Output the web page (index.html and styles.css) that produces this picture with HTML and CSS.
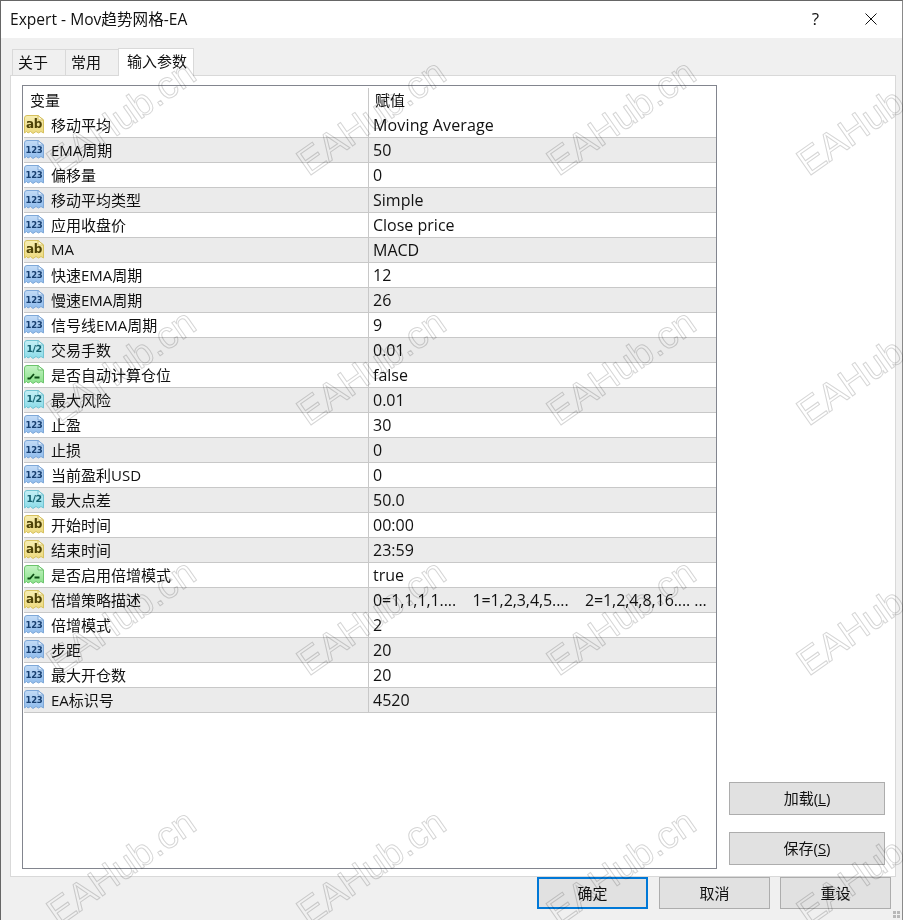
FILE: index.html
```html
<!DOCTYPE html>
<html lang="zh">
<head>
<meta charset="utf-8">
<title>Expert - Mov趋势网格-EA</title>
<link rel="stylesheet" href="styles.css">
</head>
<body>
<svg class="defs" width="0" height="0">
  <defs>
    <linearGradient id="gy" x1="0" y1="0" x2="0" y2="1"><stop offset="0" stop-color="#f7eeb4"/><stop offset="1" stop-color="#ecd97e"/></linearGradient>
    <linearGradient id="gb" x1="0" y1="0" x2="0" y2="1"><stop offset="0" stop-color="#c4dcf6"/><stop offset="1" stop-color="#8ebbec"/></linearGradient>
    <linearGradient id="gc" x1="0" y1="0" x2="0" y2="1"><stop offset="0" stop-color="#c6f0f6"/><stop offset="1" stop-color="#8adbe8"/></linearGradient>
    <linearGradient id="gg" x1="0" y1="0" x2="0" y2="1"><stop offset="0" stop-color="#c4f3c4"/><stop offset="1" stop-color="#8ae08a"/></linearGradient>
    <symbol id="sheet" viewBox="0 0 20 20">
      <path d="M0.5 3 Q0.5 0.5 3 0.5 H14 L19.5 5 V18 L17 16.5 L14.5 18 L12 16.5 L9 18.5 L6.5 16.5 L4 18 L2.5 16.5 L0.5 18 Z"/>
      <path class="fold" d="M14 0.5 V5 H19.5 Z"/>
    </symbol>
  </defs>
</svg>
<main class="window">
  <header class="titlebar">
    <span class="title">Expert - Mov趋势网格-EA</span>
    <span class="help">?</span>
    <svg class="close" width="12" height="12" viewBox="0 0 12 12"><path d="M0.5 0.5 L11.5 11.5 M11.5 0.5 L0.5 11.5"/></svg>
  </header>
  <div class="tabs">
    <span class="tab">关于</span>
    <span class="tab">常用</span>
    <span class="tab active">输入参数</span>
  </div>
  <section class="panel">
    <div class="table">
      <div class="row head"><span class="name">变量</span><span class="val cjk">赋值</span></div>
      <div class="row"><span class="name"><span class="ic ab"><svg><use href="#sheet" fill="url(#gy)"/></svg><b>ab</b></span>移动平均</span><span class="val wide">Moving Average</span></div>
      <div class="row"><span class="name"><span class="ic n"><svg><use href="#sheet" fill="url(#gb)"/></svg><b>123</b></span>EMA周期</span><span class="val">50</span></div>
      <div class="row"><span class="name"><span class="ic n"><svg><use href="#sheet" fill="url(#gb)"/></svg><b>123</b></span>偏移量</span><span class="val">0</span></div>
      <div class="row"><span class="name"><span class="ic n"><svg><use href="#sheet" fill="url(#gb)"/></svg><b>123</b></span>移动平均类型</span><span class="val">Simple</span></div>
      <div class="row"><span class="name"><span class="ic n"><svg><use href="#sheet" fill="url(#gb)"/></svg><b>123</b></span>应用收盘价</span><span class="val">Close price</span></div>
      <div class="row"><span class="name"><span class="ic ab"><svg><use href="#sheet" fill="url(#gy)"/></svg><b>ab</b></span>MA</span><span class="val">MACD</span></div>
      <div class="row"><span class="name"><span class="ic n"><svg><use href="#sheet" fill="url(#gb)"/></svg><b>123</b></span>快速EMA周期</span><span class="val">12</span></div>
      <div class="row"><span class="name"><span class="ic n"><svg><use href="#sheet" fill="url(#gb)"/></svg><b>123</b></span>慢速EMA周期</span><span class="val">26</span></div>
      <div class="row"><span class="name"><span class="ic n"><svg><use href="#sheet" fill="url(#gb)"/></svg><b>123</b></span>信号线EMA周期</span><span class="val">9</span></div>
      <div class="row"><span class="name"><span class="ic f"><svg><use href="#sheet" fill="url(#gc)"/></svg><b>1/2</b></span>交易手数</span><span class="val">0.01</span></div>
      <div class="row"><span class="name"><span class="ic t"><svg viewBox="0 0 20 20"><use href="#sheet" fill="url(#gg)"/><path class="sw" d="M3.5 13.5 H6 L10 9 M10.5 12.5 H15.5"/></svg></span>是否自动计算仓位</span><span class="val">false</span></div>
      <div class="row"><span class="name"><span class="ic f"><svg><use href="#sheet" fill="url(#gc)"/></svg><b>1/2</b></span>最大风险</span><span class="val">0.01</span></div>
      <div class="row"><span class="name"><span class="ic n"><svg><use href="#sheet" fill="url(#gb)"/></svg><b>123</b></span>止盈</span><span class="val">30</span></div>
      <div class="row"><span class="name"><span class="ic n"><svg><use href="#sheet" fill="url(#gb)"/></svg><b>123</b></span>止损</span><span class="val">0</span></div>
      <div class="row"><span class="name"><span class="ic n"><svg><use href="#sheet" fill="url(#gb)"/></svg><b>123</b></span>当前盈利USD</span><span class="val">0</span></div>
      <div class="row"><span class="name"><span class="ic f"><svg><use href="#sheet" fill="url(#gc)"/></svg><b>1/2</b></span>最大点差</span><span class="val">50.0</span></div>
      <div class="row"><span class="name"><span class="ic ab"><svg><use href="#sheet" fill="url(#gy)"/></svg><b>ab</b></span>开始时间</span><span class="val">00:00</span></div>
      <div class="row"><span class="name"><span class="ic ab"><svg><use href="#sheet" fill="url(#gy)"/></svg><b>ab</b></span>结束时间</span><span class="val">23:59</span></div>
      <div class="row"><span class="name"><span class="ic t"><svg viewBox="0 0 20 20"><use href="#sheet" fill="url(#gg)"/><path class="sw" d="M3.5 13.5 H6 L10 9 M10.5 12.5 H15.5"/></svg></span>是否启用倍增模式</span><span class="val">true</span></div>
      <div class="row"><span class="name"><span class="ic ab"><svg><use href="#sheet" fill="url(#gy)"/></svg><b>ab</b></span>倍增策略描述</span><span class="val long">0=1,1,1,1....&nbsp;&nbsp;&nbsp; 1=1,2,3,4,5....&nbsp;&nbsp;&nbsp; 2=1,2,4,8,16.... ...</span></div>
      <div class="row"><span class="name"><span class="ic n"><svg><use href="#sheet" fill="url(#gb)"/></svg><b>123</b></span>倍增模式</span><span class="val">2</span></div>
      <div class="row"><span class="name"><span class="ic n"><svg><use href="#sheet" fill="url(#gb)"/></svg><b>123</b></span>步距</span><span class="val">20</span></div>
      <div class="row"><span class="name"><span class="ic n"><svg><use href="#sheet" fill="url(#gb)"/></svg><b>123</b></span>最大开仓数</span><span class="val">20</span></div>
      <div class="row"><span class="name"><span class="ic n"><svg><use href="#sheet" fill="url(#gb)"/></svg><b>123</b></span>EA标识号</span><span class="val">4520</span></div>
    </div>
    <aside class="side">
      <button class="btn side-btn">加载(<u>L</u>)</button>
      <button class="btn side-btn">保存(<u>S</u>)</button>
    </aside>
  </section>
  <footer class="actions">
    <button class="btn act primary">确定</button>
    <button class="btn act">取消</button>
    <button class="btn act">重设</button>
  </footer>
  <svg class="grip" width="8" height="8" viewBox="0 0 8 8"><path d="M0 0h3v3H0zM4 0h3v3H4zM0 4h3v3H0zM4 4h3v3H4z"/></svg>
</main>
<div class="marks" aria-hidden="true">
  <span>EAHub.cn</span><span>EAHub.cn</span><span>EAHub.cn</span><span>EAHub.cn</span>
  <span>EAHub.cn</span><span>EAHub.cn</span><span>EAHub.cn</span><span>EAHub.cn</span>
  <span>EAHub.cn</span><span>EAHub.cn</span><span>EAHub.cn</span><span>EAHub.cn</span>
  <span>EAHub.cn</span><span>EAHub.cn</span><span>EAHub.cn</span><span>EAHub.cn</span>
</div>
</body>
</html>
```
FILE: styles.css
```css
* { box-sizing: border-box; }
html, body { margin: 0; height: 100%; }
body {
  width: 903px; height: 920px; overflow: hidden; position: relative;
  font-family: "Open Sans", "Noto Sans CJK SC", sans-serif;
  font-size: 15px; color: #111; background: #f0f0f0;
}
.defs { position: absolute; }
.window { width: 903px; height: 920px; display: flex; flex-direction: column; border-top: 1px solid #666; border-left: 1px solid #666; border-right: 1px solid #8a8a8a; position: relative; }
.titlebar { height: 37px; background: #fff; display: flex; align-items: center; padding: 0 25px 2px 9px; flex: none; }
.title { flex: 1; font-size: 15.6px; }
.help { font-size: 17px; margin-right: 46px; line-height: 1; }
.close { stroke: #111; stroke-width: 1; fill: none; }
.tabs { display: flex; padding: 10px 0 0 11px; height: 37px; flex: none; align-items: flex-end; }
.tab { height: 26px; padding: 0 0 0 5px; border: 1px solid #d9d9d9; border-bottom: 0; border-right: 0; background: #f0f0f0; line-height: 24px; font-size: 15px; width: 53px; }
.tab.active { width: 76px; height: 28px; background: #fff; border-right: 1px solid #d9d9d9; margin-bottom: -1px; position: relative; z-index: 1; padding-left: 8px; line-height: 25px; }
.panel { margin-left: 9px; width: 886px; height: 802px; background: #fff; border: 1px solid #d9d9d9; padding: 9px 10px 8px 11px; display: flex; flex: none; }
.table { width: 695px; height: 784px; border: 1px solid #82858e; padding: 2px 0 0 1px; flex: none; }
.row { height: 25px; display: flex; border-bottom: 1px solid #c8c8c8; align-items: center; }
.row:nth-child(odd) { background: #ebebeb; }
.row.head { border-bottom: 0; height: 25px; background: #fff; }
.name { width: 345px; height: 100%; flex: none; display: flex; align-items: center; border-right: 1px solid #c8c8c8; padding: 0 0 2px 27px; position: relative; }
.head .name { padding-left: 6px; }
.val { padding: 0 0 1px 4px; white-space: nowrap; font-size: 16px; line-height: 22px; }
.val.cjk { font-size: 15px; padding-left: 6px; padding-bottom: 2px; }
.val.wide { letter-spacing: 0.15px; }
.val.long { letter-spacing: -0.08px; }
.ic { position: absolute; left: 0; top: 2px; width: 20px; height: 20px; }
.ic svg { position: absolute; inset: 0; width: 20px; height: 20px; stroke-width: 1; }
.ab svg { stroke: #d6c15e; }
.n svg { stroke: #7ea8d8; }
.f svg { stroke: #72c3d2; }
.t svg { stroke: #6cc46c; }
.fold { fill: #ffffffaa; }
.sw { fill: none; stroke: #0b4d14; stroke-width: 1.8; }
.ic b { position: absolute; left: 0; right: 0; top: 5px; text-align: center; font: bold 8.5px/11px "DejaVu Sans", sans-serif; color: #173f70; letter-spacing: -0.3px; }
.ab b { color: #4d4208; font: bold 12px/11px "DejaVu Sans", sans-serif; letter-spacing: -0.3px; top: 4px; }
.f b { color: #15606e; font-size: 9.5px; letter-spacing: -0.6px; top: 3px; }
.side { flex: 1; display: flex; flex-direction: column; justify-content: flex-end; align-items: flex-end; gap: 17px; padding-bottom: 3px; }
.btn { font: 15px "Open Sans", "Noto Sans CJK SC", sans-serif; color: #111; background: #e1e1e1; border: 1px solid #adadad; padding: 0 0 2px; }
.side-btn { width: 156px; height: 33px; }
.actions { flex: 1; display: flex; justify-content: flex-end; gap: 11px; padding: 0 11px 0 0; }
.act { width: 111px; height: 32px; }
.act:last-child { margin-left: -1px; }
.primary { border: 2px solid #0078d7; }
.grip { position: absolute; right: 1px; bottom: 1px; fill: #b8b8b8; }
.marks {
  position: absolute; left: 0; top: 0; width: 903px; height: 920px; z-index: 2;
  display: grid; grid-template-columns: repeat(4, 250px); grid-auto-rows: 250px;
  pointer-events: none; overflow: hidden; mix-blend-mode: multiply;
}
.marks span {
  font: 38px/43px "Liberation Sans", sans-serif; color: transparent;
  -webkit-text-stroke: 1px #d6d6d6; white-space: nowrap;
  transform: rotate(-35deg); transform-origin: left top; align-self: start; justify-self: start;
  margin: 149px 0 0 39px;
}
```
